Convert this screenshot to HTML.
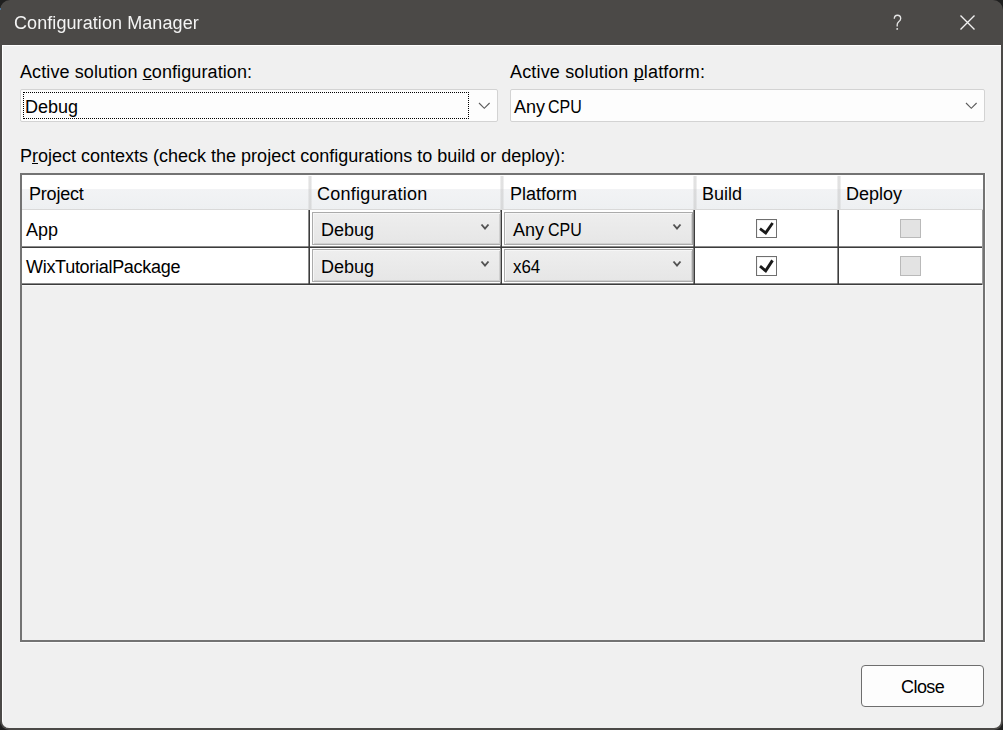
<!DOCTYPE html>
<html><head><meta charset="utf-8">
<style>
*{box-sizing:border-box;margin:0;padding:0}
html,body{width:1003px;height:730px;overflow:hidden;background:#1f1f1f}
body{position:relative;font-family:"Liberation Sans",sans-serif;font-size:18px;color:#000}
.a{position:absolute}
u{text-decoration-skip-ink:none}
.win{left:0;top:0;width:1003px;height:730px;background:#4b4947;border-radius:10px 10px 9px 9px}
.body{left:2px;top:45px;width:999px;height:683px;background:#f0f0f0;border-top:1px solid #fff;border-left:1px solid #fff;border-radius:0 0 7px 7px}
.t{position:absolute;white-space:pre;line-height:20px;height:20px}
.title{color:#f4f4f4;left:14px;top:13px;will-change:transform}
.combo{position:absolute;background:#fdfdfd;border:1px solid #d3d3d3;border-radius:2px}
.tbl{left:20px;top:173px;width:965px;height:469px;border:2px solid #737373;box-shadow:0 1px 0 #fbfbfb,1px 0 0 #fbfbfb}
.hdr{left:22px;top:175px;width:961px;height:35px;background:linear-gradient(#fff 0,#fff 14px,#f2f3f5 14px,#eef0f2 34px,#d9d9d9 34px)}
.hsep{position:absolute;top:176px;width:4px;height:33px;background:linear-gradient(90deg,rgba(200,200,200,.3) 25%,rgba(190,190,190,.45) 25%,rgba(190,190,190,.45) 75%,rgba(200,200,200,.3) 75%)}
.hl{position:absolute;height:2px;background:linear-gradient(rgba(60,60,60,.6) 0,rgba(60,60,60,.6) 50%,#3c3c3c 50%)}
.vl{position:absolute;width:2px;background:linear-gradient(90deg,rgba(60,60,60,.6) 0,rgba(60,60,60,.6) 50%,#3c3c3c 50%)}
.rc{position:absolute;width:189px;height:33px;border:1px solid #ababab;border-right-color:#a2a2a2;background:linear-gradient(#eeeeee,#e6e6e6);box-shadow:inset 1px 1px 0 #f6f6f6,inset -1px -1px 0 #d0d0d0}
.cb{position:absolute;width:21px;height:19px;border:1px solid #6f6f6f;background:#fff;box-shadow:inset 1px 1px 0 #f4f4f4}
.cbd{position:absolute;width:21px;height:19px;border:1px solid #b9b9b9;background:#e3e3e3}
.btn{left:861px;top:665px;width:123px;height:42px;border:1px solid #6e6e6e;border-radius:4px;background:#fdfdfd}
</style></head><body>
<div class="a win"></div>
<div class="a body"></div>
<div class="a" style="left:0;top:8px;width:1px;height:2px;background:#4d7fae;opacity:.85"></div>
<div class="t title" style="letter-spacing:0.08px">Configuration Manager</div>
<svg class="a" style="left:0;top:0" width="1003" height="45">
  <path d="M894.3 18.7 C894.4 16.3 895.7 15.2 897.4 15.2 C899.3 15.2 900.7 16.5 900.7 18.4 C900.7 20.2 899.6 21 898.5 21.9 C897.6 22.7 897.2 23.4 897.2 24.8 L897.2 26.5" stroke="#e4e4e4" stroke-width="1.35" fill="none"/>
  <circle cx="897.2" cy="28.9" r="0.95" fill="#e4e4e4"/>
  <path d="M960.5 15.5 L974.5 29.5 M974.5 15.5 L960.5 29.5" stroke="#f2f2f2" stroke-width="1.4" fill="none"/>
</svg>

<div class="t" style="left:20px;top:62px;letter-spacing:0.1px">Active solution <u>c</u>onfiguration:</div>
<div class="combo" style="left:20px;top:89px;width:478px;height:33px"></div>
<div class="a" style="left:23px;top:92px;width:446px;height:27px;border:1px dotted #000"></div>
<div class="t" style="left:25px;top:97px">Debug</div>
<svg class="a" style="left:478px;top:100px" width="14" height="10"><path d="M1 3 L6.3 8.3 L11.6 3" stroke="#5c5c5c" stroke-width="1.15" fill="none"/></svg>

<div class="t" style="left:510px;top:62px;letter-spacing:0.16px">Active solution <u>p</u>latform:</div>
<div class="combo" style="left:510px;top:89px;width:475px;height:33px"></div>
<div class="t" style="left:514px;top:97px">Any</div><div class="t" style="left:548px;top:97px;transform:scaleX(0.888);transform-origin:0 0">CPU</div>
<svg class="a" style="left:965px;top:100px" width="14" height="10"><path d="M1 3 L6.3 8.3 L11.6 3" stroke="#5c5c5c" stroke-width="1.15" fill="none"/></svg>

<div class="t" style="left:20px;top:146px">P<u>r</u>oject contexts (check the project configurations to build or deploy):</div>

<div class="a tbl"></div>
<div class="a hdr"></div>
<div class="hsep" style="left:308px"></div>
<div class="hsep" style="left:500px"></div>
<div class="hsep" style="left:693px"></div>
<div class="hsep" style="left:837px"></div>
<div class="t" style="left:29px;top:184px;letter-spacing:-0.2px">Project</div>
<div class="t" style="left:317px;top:184px;letter-spacing:0.27px">Configuration</div>
<div class="t" style="left:510px;top:184px">Platform</div>
<div class="t" style="left:702px;top:184px">Build</div>
<div class="t" style="left:846px;top:184px">Deploy</div>

<div class="a" style="left:22px;top:210px;width:961px;height:74px;background:#fff"></div>
<div class="a" style="left:22px;top:285px;width:961px;height:1px;background:#fafafa"></div>
<div class="hl" style="left:22px;top:246px;width:961px"></div>
<div class="hl" style="left:22px;top:283px;width:961px"></div>
<div class="vl" style="left:308px;top:210px;height:75px"></div>
<div class="vl" style="left:500px;top:210px;height:75px"></div>
<div class="vl" style="left:693px;top:210px;height:75px"></div>
<div class="vl" style="left:837px;top:210px;height:75px"></div>
<div class="a" style="left:982px;top:210px;width:1px;height:75px;background:#9a9a9a"></div>

<div class="t" style="left:26px;top:220px">App</div>
<div class="t" style="left:26px;top:257px;letter-spacing:-0.29px">WixTutorialPackage</div>

<div class="rc" style="left:312px;top:212px"></div>
<div class="t" style="left:321px;top:220px">Debug</div>
<svg class="a" style="left:480px;top:222px" width="10" height="9"><path d="M1.5 2.5 L5 6.6 L8.5 2.5" stroke="#525252" stroke-width="1.9" fill="none"/></svg>
<div class="rc" style="left:504px;top:212px"></div>
<div class="t" style="left:513px;top:220px">Any</div><div class="t" style="left:548px;top:220px;transform:scaleX(0.888);transform-origin:0 0">CPU</div>
<svg class="a" style="left:672px;top:222px" width="10" height="9"><path d="M1.5 2.5 L5 6.6 L8.5 2.5" stroke="#525252" stroke-width="1.9" fill="none"/></svg>

<div class="rc" style="left:312px;top:249px"></div>
<div class="t" style="left:321px;top:257px">Debug</div>
<svg class="a" style="left:480px;top:259px" width="10" height="9"><path d="M1.5 2.5 L5 6.6 L8.5 2.5" stroke="#525252" stroke-width="1.9" fill="none"/></svg>
<div class="rc" style="left:504px;top:249px"></div>
<div class="t" style="left:513px;top:257px;transform:scaleX(0.94);transform-origin:0 0">x64</div>
<svg class="a" style="left:672px;top:259px" width="10" height="9"><path d="M1.5 2.5 L5 6.6 L8.5 2.5" stroke="#525252" stroke-width="1.9" fill="none"/></svg>

<div class="cb" style="left:756px;top:219px"></div>
<svg class="a" style="left:756px;top:219px" width="21" height="19"><path d="M4 9.7 L9.7 13.9 L16.6 4" stroke="#1a1a1a" stroke-width="2.8" fill="none"/></svg>
<div class="cb" style="left:756px;top:256px;height:20px"></div>
<svg class="a" style="left:756px;top:256px" width="21" height="20"><path d="M4 10.2 L9.7 14.8 L16.5 4.4" stroke="#1a1a1a" stroke-width="2.9" fill="none"/></svg>
<div class="cbd" style="left:900px;top:219px"></div>
<div class="cbd" style="left:900px;top:256px;height:20px"></div>

<div class="a btn"></div>
<div class="t" style="left:901px;top:677px;letter-spacing:-0.55px">Close</div>
</body></html>
